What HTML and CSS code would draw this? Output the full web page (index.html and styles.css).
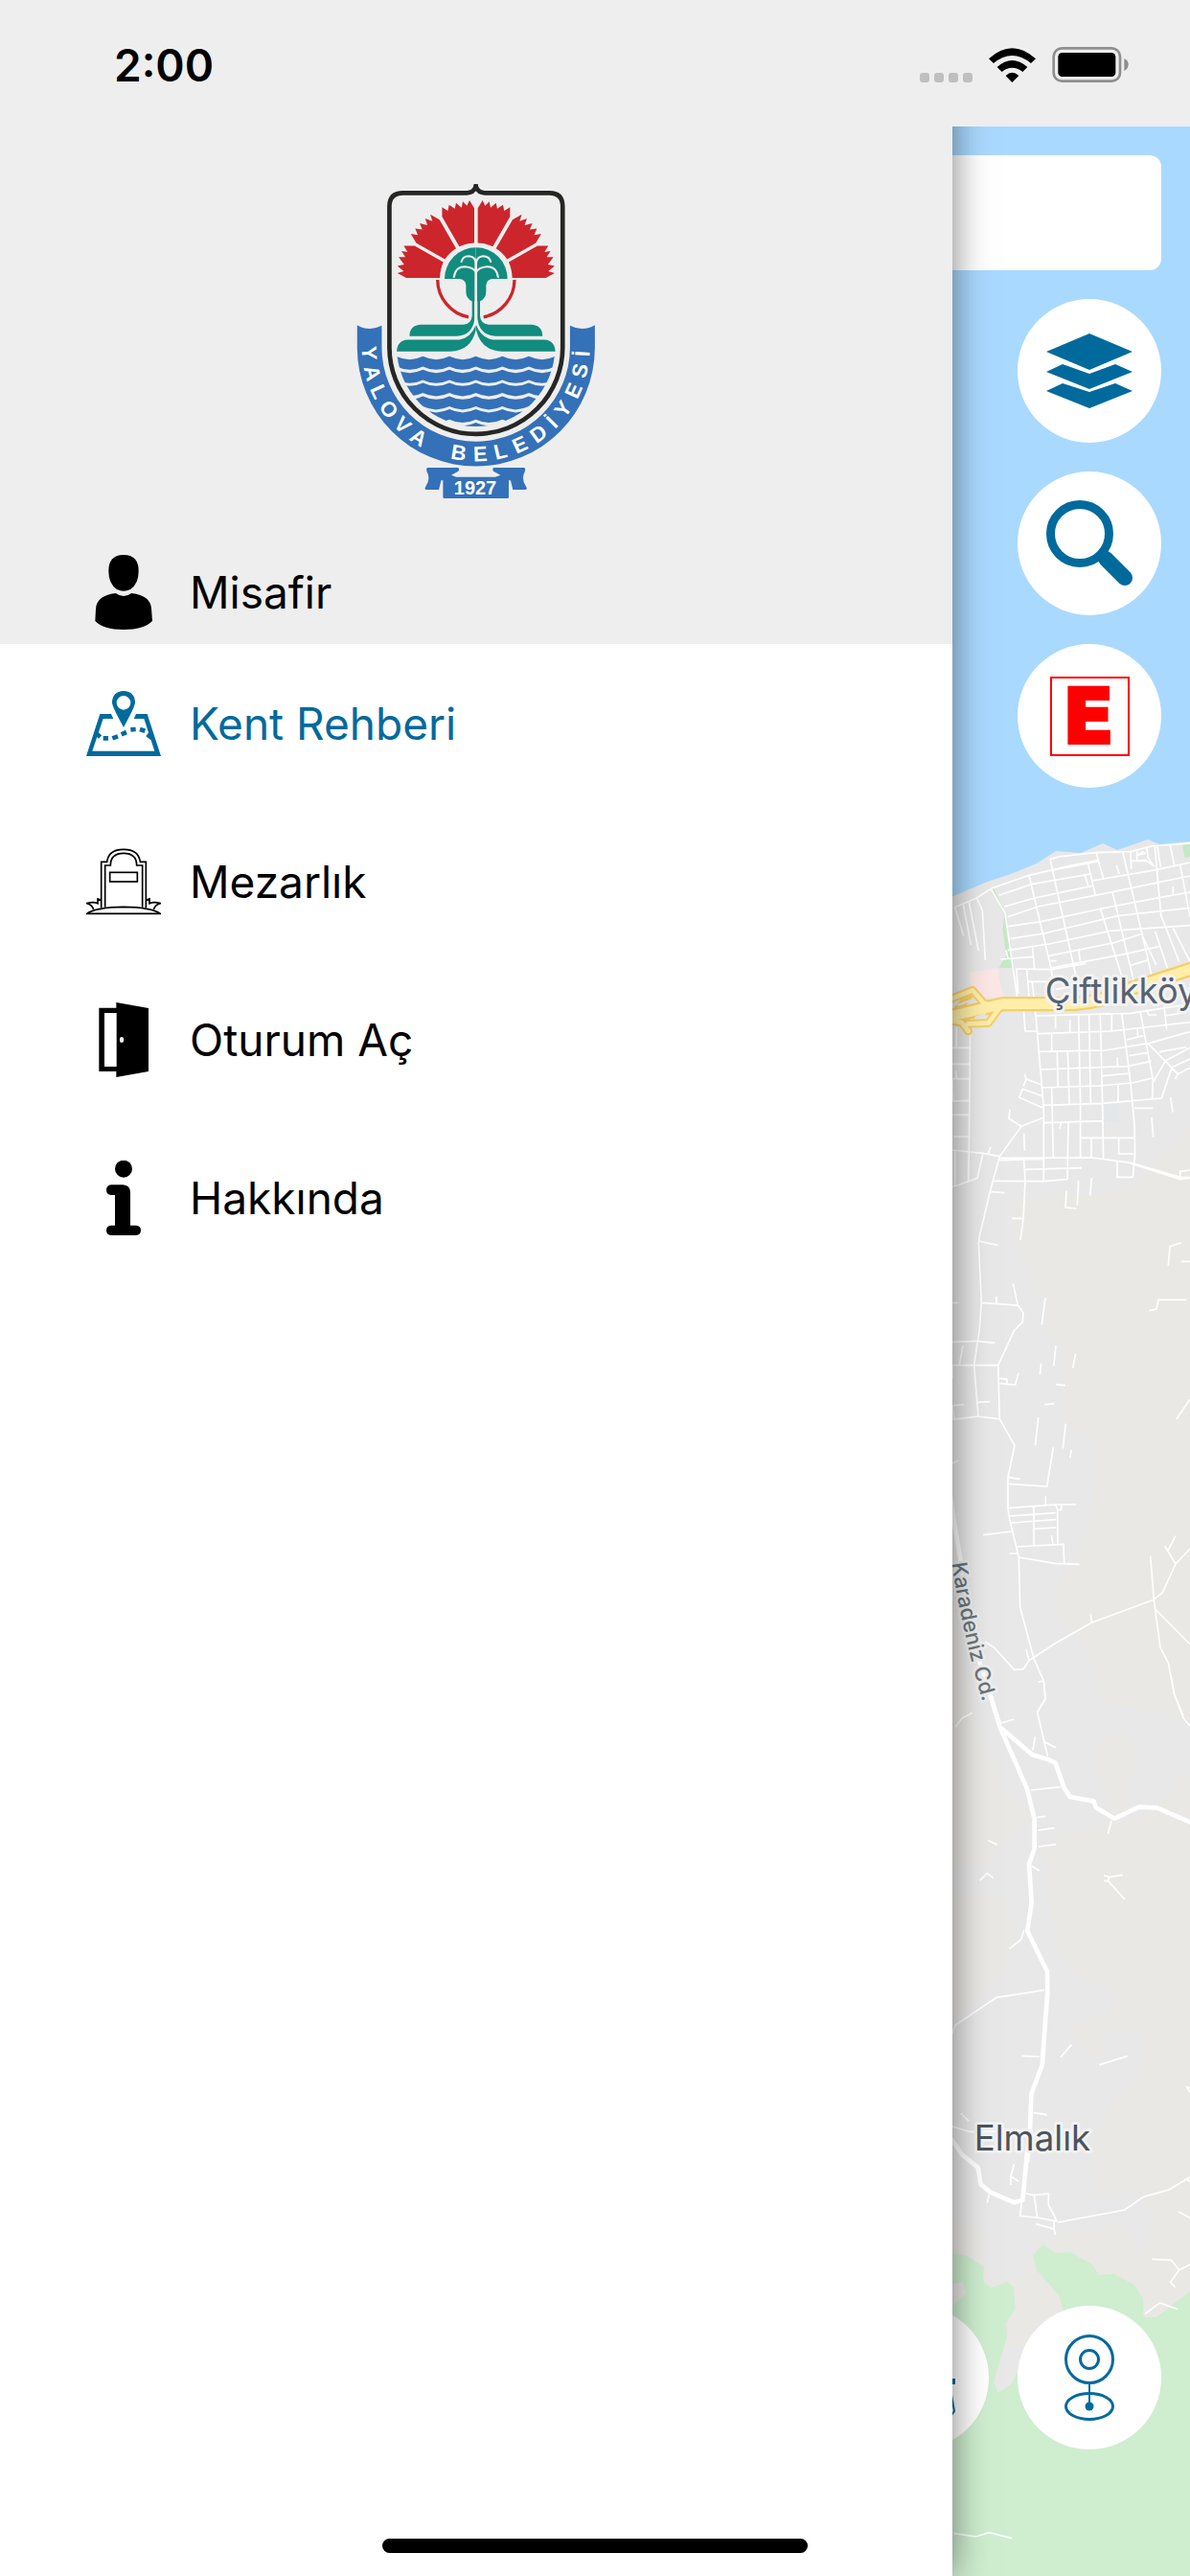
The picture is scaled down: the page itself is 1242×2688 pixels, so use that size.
FILE: index.html
```html
<!DOCTYPE html>
<html lang="tr">
<head>
  <meta charset="UTF-8" />
  <meta name="viewport" content="width=device-width, initial-scale=1.0"/>
  <title>Yalova Kent Rehberi</title>
  <link rel="stylesheet" href="styles.css">
</head>

<body>

<div class="app">

  <header class="status-bar">
    <span class="time">2:00</span>
    <div class="status-icons">
      <div class="signal"><i></i><i></i><i></i><i></i></div>
      <svg class="wifi" viewBox="276 57 147 108">
        <path d="M276 91 Q349 25 423 91 L408 105 Q349 57 291 105Z"/>
        <path d="M302 117 Q349 75 397 117 L382 132 Q349 107 317 132Z"/>
        <path d="M329 144 Q349 124 370 144 L349 165Z"/>
      </svg>
      <svg class="battery" viewBox="474 57 238 111">
        <rect x="478" y="61" width="208" height="103" rx="26" fill="none" stroke="#8e8e8e" stroke-width="8"/>
        <rect x="492" y="75" width="180" height="75" rx="13"/>
        <path d="M699 93 Q712 99 712 112 Q712 126 699 132Z" fill="#8e8e8e"/>
      </svg>
    </div>
  </header>

  <main class="map">
    <svg class="map-tiles" viewBox="0 132 1242 2556" preserveAspectRatio="xMaxYMin slice">
      <rect x="0" y="132" width="1242" height="2556" fill="#e8e8e8"/>

      <!-- terrain -->
      <g fill="#e9e8e4">
        <path d="M1242 1177 L1213 1200 1197 1217 1180 1237 1153 1248 1113 1248 1052 1253 1058 1277 1062 1297 1072 1327 1088 1357 1095 1390 1113 1410 1110 1430 1112 1470 1115 1490 1140 1497 1147 1507 1140 1543 1138 1583 1130 1613 1103 1647 1103 1690 1123 1710 1140 1733 1152 1777 1242 1793Z"/>
        <path d="M1242 1853 H1228 L1220 1877 1187 1897 1160 1900 1117 1913 1080 1927 1095 1947 1098 2000 1103 2030 1123 2057 1162 2080 1157 2098 1117 2112 1120 2130 1147 2147 1155 2122 1180 2117 1193 2127 1190 2160 1167 2187 1147 2217 1143 2250 1147 2267 1140 2290 1180 2287 1207 2317 1190 2347 1167 2320 1080 2340 1070 2375 1040 2382 1030 2370 1025 2327 993 2313 V2450 H1242Z"/>
        <path d="M993 1660 L1020 1800 1047 1867 1077 1897 1035 1935 1030 1947 H993Z"/>
        <path d="M993 1980 H1047 L1057 2017 1047 2057 993 2110Z"/>
        <path d="M1147 1813 Q1187 1800 1187 1843 L1173 1873 1180 1893 1160 1897 1145 1843Z"/>
      </g>

      <!-- sea -->
      <path fill="#aad9ff" d="M0 132 H1242 V878 L1210 881 1198 876 1166 887 1151 880 1128 890 1102 888 1082 901 1055 912 1028 921 993 936 0 1000Z"/>

      <!-- forest -->
      <g transform="translate(980 2200) scale(.33333)">
        <path fill="#ceeecf" d="M39 453 L83 460 141 495 138 540 163 562 215 542 234 560 238 628 210 672 213 715 171 857 186 890 225 865 300 720 390 632 375 585 305 505 294 458 326 427 365 452 410 450 478 487 500 521 550 519 612 553 638 595 640 653 681 653 786 573 V1464 H-2940 V620 H39 L84 580 73 543 39 549Z"/>
        <path class="street" d="M39 56 L95 73 H220 M68 15 L94 40 M296 14 L338 20 M235 175 L225 213 250 229 M225 213 V240 M157 270 L151 296 M260 285 L254 337 308 342 370 354 M272 267 L298 272 343 267 V303 L370 354 M298 272 L308 342 M302 361 L360 378 365 397 M360 355 V378 M372 357 L582 318 640 277 720 255 786 215 M776 222 L786 230 M750 323 L786 343 M667 472 L727 475 752 506 786 489 M752 506 L725 544 739 560 M645 644 L691 609 748 629 M45 1330 L115 1341 157 1328 228 1346"/>
        <path class="road" d="M39 96 L72 145 122 185 131 238 160 262 236 295 262 287 278 120"/>
      </g>

      <!-- town blocks -->
      <g transform="translate(980 840) scale(.33333)">
        <path fill="#c5e8c5" d="M163 260 L170 258 207 340 236 510 H188 L210 470 200 390 204 345Z M762 126 L786 120 V163 L770 165Z"/>
        <path fill="#fce7e6" d="M95 525 L183 511 190 555 207 603 105 600Z"/>
        <path fill="#e4e7ea" d="M515 935 H563 V992 H515Z"/>
        <path class="street" d="M50 320 L118 291 163 262 282 220 410 190 500 173 M348 170 L375 162 492 149 600 146 665 129 786 120 M50 320 L77 410 M76 310 L100 438 M94 303 L124 457 M118 291 L136 330 145 486"/>
        <path class="street" d="M163 262 L207 340 245 600 M282 220 L352 515 358 580 M348 170 L432 550 M492 149 L515 230 M466 180 L490 284 M455 215 L467 252 M505 323 L578 553 M543 272 L612 560 M575 146 L640 420 665 530 M676 130 L695 345 752 490 M733 385 L786 490 M755 186 L786 350 M724 127 L738 193 M684 130 L694 195 M556 188 L564 216 M733 255 V280"/>
        <path class="street" d="M188 283 L290 248 475 216 M205 318 L300 291 480 253 M215 350 L310 318 545 272 786 222 M217 380 L320 365 510 324 690 290 786 273 M225 418 L330 402 560 347 786 322 M215 455 L345 435 535 394 786 377 M193 483 L295 475 M345 472 L545 432 640 402 M350 510 L580 467 692 442 M240 513 L352 515 460 496 M210 455 L216 480 M293 447 L299 512 M480 237 L680 203 786 180 M350 205 L498 177 M600 145 L602 200 M604 175 H650 L675 192 M620 145 V175 L650 172 M650 130 L655 165 670 188 M637 410 L680 500 M677 395 L715 510 M597 503 L657 485 M640 145 L620 158 648 150"/>
        <path class="street" d="M243 515 L248 590 M275 515 L282 600 M280 553 H350 M292 555 L297 600 M437 453 L442 488 M345 488 H368 M365 577 L430 566"/>
        <path class="street" d="M265 640 L270 708 H305 M302 645 L328 950 V1175 M305 660 L480 655 600 652 786 623 M310 716 L540 708 786 680 M310 772 L520 768 660 745 786 710 M318 828 L590 818 665 802 M323 885 L500 879 605 870 667 855 M328 940 L510 934 697 918 M330 995 L512 989 M446 1042 H610 M365 660 V700 M410 672 V712 M353 717 V770 M370 772 L373 882 M353 885 L358 1105 M403 770 L408 935 M437 655 L440 800 443 935 M470 655 L475 935 M505 655 L512 935 515 1108 M541 655 V708 M572 650 L600 870 612 1000 614 1092 607 1165 M630 645 L670 860 668 918 M588 735 L640 722 M595 785 L655 775 M512 848 L600 840 M622 700 V722 M650 640 L656 657 H682 M705 630 L713 703 M708 660 L756 652 V630 M670 868 L710 800 786 760 M655 747 L748 842 786 823 M740 858 L748 842 728 825 697 918 M690 773 L775 758 M728 822 L786 795"/>
        <path class="street" d="M559 790 V818 M561 877 V930 M443 935 V1103 M405 990 L402 1172 M382 995 L378 1014 M477 1042 V1103 M563 1042 V1092 H614 M612 949 H670 M666 978 L671 1040 M725 915 L732 962 M190 1105 L480 1104 600 1120 755 1165 786 1166 M190 1112 L330 1108 M600 1122 L755 1172 786 1168 M755 1165 V1147 L786 1143 M558 1116 V1165 H607 M268 1141 L447 1136 M172 1177 L328 1178 402 1172"/>
        <path class="street" d="M39 1080 L138 1090 190 1100 258 1006 328 978 M258 1006 L219 982 222 953 M190 1100 L160 1210 127 1350 M160 1210 L205 1214 M138 1090 L120 1168 39 1197 M155 1090 L162 1070 M266 1028 L268 1082 M266 1112 L270 1178 264 1295 257 1350 M228 1294 H264 M268 842 L273 858 320 875 M273 858 L265 880 M325 912 L262 889 251 915 325 948 M98 700 L94 1080 92 1182 M39 760 H94 M39 811 H95 M39 857 H94 M39 927 L94 925 M39 970 H92 M45 1038 H92 M55 695 V760 M53 832 L55 857 M50 1080 V1195 M42 860 L45 925 M399 1208 L396 1260 430 1263 M437 1175 L433 1253 M478 1167 L473 1223"/>

        <!-- motorway and junction -->
        <g fill="none" stroke-linejoin="round" stroke-linecap="round">
          <path stroke="#f7cf65" stroke-width="46" d="M20 665 L200 623 H420 Q520 615 600 575 L800 510"/>
          <path stroke="#f7cf65" stroke-width="26" d="M30 610 L105 580 140 620 190 635 155 682 90 685 M30 675 L70 680 92 708 M105 580 L60 640"/>
          <path stroke="#ffefaa" stroke-width="14" d="M30 610 L105 580 140 620 190 635 155 682 90 685 M30 675 L70 680 92 708"/>
          <path stroke="#ffefaa" stroke-width="32" d="M20 665 L200 623 H420 Q520 615 600 575 L800 510"/>
          <path stroke="#e8e8e8" stroke-width="7" d="M60 626 L100 612 M115 665 L145 655"/>
        </g>
        <text class="place" x="332" y="622" fill="#59626f">Çiftlikköy</text>
      </g>

      <!-- open country -->
      <g transform="translate(980 1290) scale(.33333)">
        <path class="street" d="M127 0 L124 20 133 208 127 290 110 404 123 564 M124 15 L184 28 M256 0 L255 12 M133 208 L247 216 232 148 M180 188 V212 M247 216 L264 240 262 268 235 296 185 404 190 572 M39 331 L120 328 175 334 M39 404 H185 M75 342 L64 402 M42 404 V445 M39 208 L60 209 M190 445 L212 447 214 460 M190 461 L239 465 249 428 M39 574 L123 564 190 572 237 655 216 755 V852 L220 880 250 1005 254 1162 298 1325 328 1392 333 1447 307 1492 M39 530 L78 527 M122 520 L159 518 M42 530 L47 572"/>
        <path class="street" d="M333 193 L322 276 M366 342 L359 406 M428 367 L419 412 M320 398 L316 433 M366 464 L396 467 M330 527 L362 524 M311 567 L302 654 M397 587 L388 664 M415 668 L410 694 M358 661 L338 783 216 775 M216 755 L254 760 M334 814 V840 M216 851 L365 840 H430 M365 840 L371 857 383 856 V836 M371 857 L372 962 M220 876 L365 866 M228 897 L367 887 M299 916 L367 912 M297 845 V967 M240 972 L390 964 392 1024 M352 936 L357 963 M138 935 L230 924 M221 993 H246 M250 1005 L362 1024 440 1027"/>
        <path class="street" d="M145 1270 L172 1287 236 1357 264 1355 282 1328 363 1275 478 1210 672 1138 700 1115 741 1026 786 978 M282 1328 L273 1294 M478 1210 L475 1182 M741 1026 L707 970 M717 984 L741 938 M662 1000 L673 1138 693 1288 718 1335 737 1435 765 1500 M678 1168 L786 1277 M744 572 L786 510 M718 92 L723 32 758 20 M758 79 H786 M658 233 L681 228 687 199 H776 M312 1395 L328 1392 M39 712 L60 703"/>
        <path class="road" d="M20 700 L45 880 75 1060 110 1280 190 1530"/>
        <path id="karadeniz" fill="none" d="M40 1024 Q72 1240 142 1475"/>
        <text class="street-name"><textPath href="#karadeniz">Karadeniz Cd.</textPath></text>
      </g>

      <g transform="translate(980 1750) scale(.33333)">
        <path class="street" d="M51 157 L72 129 105 112 M195 144 L234 132 M301 187 L294 230 M328 12 L333 68 308 110 340 247 M331 203 L366 221 M288 354 L380 344 M308 439 L333 436 M310 480 L362 472 M312 531 L366 524 M290 591 L314 606 M154 511 L182 525 M128 637 L151 614 170 629 M540 450 L529 491 M516 621 L534 626 576 619 M516 638 L529 637 582 696 M534 626 L529 637 M266 793 L257 822 220 851 M330 980 L180 1003 52 1089 39 1120 M260 1186 L315 1188 M415 1151 L380 1191 M501 1214 L590 1187 M297 1365 L338 1370 M727 0 L737 55 765 128 786 153 M786 1300 L776 1284 786 1286"/>
        <path class="road" d="M162 60 L190 155 276 350 299 445 V536 L282 585 290 705 277 795 339 922 340 985 323 1215 289 1305 285 1420 276 1520 M190 155 L292 243 345 259 365 269 391 345 410 375 485 389 491 408 550 443 625 407 682 409 800 460"/>
        <text class="place" x="110" y="1482" fill="#4d545c">Elmalık</text>
      </g>
    </svg>

    <div class="map-controls">
      <input class="search-box" type="text" aria-label="Adres ara">
      <button class="round-btn" aria-label="Katmanlar">
        <svg viewBox="0 0 90 90" fill="#016a9c">
          <path d="M45 6 L90 25 45 44 0 25Z"/>
          <path d="M17 38 L45 48 72 38 90 46 45 64 0 46Z"/>
          <path d="M17 58 L45 67 72 58 90 66 45 84 0 66Z"/>
        </svg>
      </button>
      <button class="round-btn" aria-label="Ara">
        <svg viewBox="0 0 90 90" fill="none" stroke="#016a9c">
          <circle cx="35" cy="35" r="30.5" stroke-width="9"/>
          <path d="M62 61 L82 81" stroke-width="16" stroke-linecap="round"/>
        </svg>
      </button>
      <button class="round-btn" aria-label="Nöbetçi eczaneler">
        <svg viewBox="0 0 90 90" fill="#ff0000">
          <rect x="5" y="5" width="81" height="81" fill="none" stroke="#ff0000" stroke-width="2"/>
          <text class="pharmacy" x="44" y="73" text-anchor="middle">E</text>
        </svg>
      </button>
      <div class="bottom-controls">
        <button class="round-btn" aria-label="Ölçüm">
          <svg viewBox="0 0 90 90" fill="#016a9c">
            <rect x="5" y="46" width="80" height="6"/>
            <path d="M79 52 L84 80 81 84 76 80 M11 52 L6 80 9 84 14 80" fill="none" stroke="#016a9c" stroke-width="2"/>
          </svg>
        </button>
        <button class="round-btn" aria-label="Kameralar">
          <svg viewBox="0 0 90 90" fill="none" stroke="#016a9c">
            <circle cx="45" cy="26" r="24.5" stroke-width="3"/>
            <circle cx="45" cy="26" r="9.5" stroke-width="3"/>
            <path d="M45 51 V75" stroke-width="2"/>
            <ellipse cx="45" cy="75" rx="24.5" ry="13.5" stroke-width="3"/>
            <circle cx="45" cy="75" r="4.5" fill="#016a9c" stroke="none"/>
          </svg>
        </button>
      </div>
    </div>
  </main>

  <aside class="drawer">
    <div class="drawer-header">
      <svg class="logo" viewBox="66 38 747 985" role="img" aria-label="Yalova Belediyesi 1927">
        <defs>
          <clipPath id="sea"><circle cx="440" cy="550" r="248"/></clipPath>
          <path id="wave" d="M25 578 q42 20 83 0 q42 20 83 0 q42 20 83 0 q42 20 83 0 q42 20 83 0 q42 20 83 0 q42 20 83 0 q42 20 83 0 v32 q-42 20 -83 0 q-42 20 -83 0 q-42 20 -83 0 q-42 20 -83 0 q-42 20 -83 0 q-42 20 -83 0 q-42 20 -83 0 q-42 20 -83 0Z"/>
          <path id="motto" d="M83 530 V550 A357 357 0 0 0 797 550 V500"/>
          <g id="half">
            <g fill="#cc262c">
              <path d="M334 111 L352 122 356 103 374 115 378 97 395 112 399 93 412 106 420 89 435 114 V223 Q410 224 388 234 L334 140Z"/>
              <path d="M297 133 L326 150 378 240 Q357 253 343 274 L253 223 236 194 258 198 250 178 272 181 264 161 288 167 281 146 304 154Z"/>
              <path d="M214 232 H248 L338 283 Q328 305 327 332 H222 L194 317 214 311 194 295 215 290 198 267 219 267 207 248 226 251Z"/>
              <path d="M320 338 A120 120 0 0 0 417 455" fill="none" stroke="#cc262c" stroke-width="10"/>
            </g>
            <g fill="#128c7e">
              <path d="M342 335 A98 98 0 0 1 440 237 V405 H428 Q409 397 409 375 V355 Q408 338 390 335Z"/>
              <path d="M428 400 H436 V460 Q430 512 380 515 H232 Q233 480 268 479 H400 Q427 476 428 450Z"/>
              <path d="M192 563 Q194 528 226 526 H388 Q424 520 440 480 V495 Q425 560 360 563Z"/>
            </g>
            <path d="M394 284 Q398 264 418 264 Q438 266 440 285 M371 332 Q375 297 405 297 Q434 299 440 315" fill="none" stroke="#eee" stroke-width="6"/>
          </g>
        </defs>

        <path d="M68 480 Q106 502 145 482 V550 A295 295 0 0 0 735 550 V482 Q774 502 813 480 V550 A372 372 0 0 1 68 550Z" fill="#3471b8"/>
        <path d="M169 108 Q169 66 212 66 H412 Q432 66 440 46 Q448 66 468 66 H670 Q712 66 712 108 V550 A271 271 0 0 1 169 550Z" fill="#eee" stroke="#262624" stroke-width="14"/>
        <rect x="433" y="39" width="14" height="18" fill="#262624"/>

        <use href="#half"/>
        <use href="#half" transform="matrix(-1 0 0 1 881 0)"/>
        <path d="M440 275 V475" stroke="#eee" stroke-width="8"/>

        <g clip-path="url(#sea)" fill="#3471b8">
          <use href="#wave"/>
          <use href="#wave" y="42"/>
          <use href="#wave" y="83"/>
          <use href="#wave" y="125"/>
          <use href="#wave" y="166"/>
          <use href="#wave" y="208"/>
        </g>

        <g fill="#3471b8">
          <path d="M288 927 H384 Q390 930 385 938 L363 950 378 956 H540 Q543 956 543 960 V1019 Q543 1023 539 1023 H341 Q337 1023 337 1019 V967 H331 L324 996 H284 Q278 994 282 988 Q300 962 286 938 Q284 930 288 927Z"/>
          <path d="M592 927 H496 Q490 930 495 938 L517 950 502 956 V967 H549 L556 996 H596 Q602 994 598 988 Q580 962 594 938 Q596 930 592 927Z"/>
        </g>
        <g class="logo-text" fill="#fff">
          <text><textPath href="#motto" startOffset="17">Y&#8196;A&#8196;L&#8196;O&#8196;V&#8196;A</textPath></text>
          <text><textPath href="#motto" startOffset="499">B&#8201;&#8201;E&#8201;&#8201;L&#8201;&#8201;E&#8201;&#8201;D&#8201;&#8201;İ&#8201;&#8201;Y&#8201;&#8201;E&#8201;&#8201;S&#8201;&#8201;İ</textPath></text>
          <text class="year" x="438" y="1011" text-anchor="middle">1927</text>
        </g>
      </svg>

      <div class="user">
        <svg class="icon" viewBox="90 57 234 234">
          <path d="M207 57 Q254 57 254 108 Q254 148 228 165 Q207 176 186 165 Q160 148 160 108 Q160 57 207 57Z"/>
          <path d="M182 177 Q207 195 232 177 Q292 184 294 226 L297 264 Q270 291 207 291 Q144 291 118 264 L120 226 Q122 184 182 177Z"/>
        </svg>
        <span>Misafir</span>
      </div>
    </div>

    <nav class="menu">
      <a class="active" href="#">
        <svg class="icon" viewBox="90 468 234 234">
          <path fill-rule="evenodd" d="M207 483 Q243 485 243 520 Q243 532 207 597 Q171 532 171 520 Q171 485 207 483Z M207 498 A22 22 0 1 0 207 542 A22 22 0 1 0 207 498Z"/>
          <path fill-rule="evenodd" d="M133 555 H168 L175 570 H143 L109 671 H304 L271 570 H239 L246 555 H281 L324 687 H90Z"/>
          <path d="M120 615 L134 627 M143 631 H159 M172 631 L189 625 M200 619 L216 612 M229 604 L245 603 M258 603 L274 608 M281 619 L297 631" fill="none" stroke="currentColor" stroke-width="14"/>
        </svg>
        <span>Kent Rehberi</span>
      </a>
      <a href="#">
        <svg class="icon outline" viewBox="90 63 234 234">
          <path d="M137 262 V118 H155 Q160 79 207 79 Q254 79 259 118 H277 V262"/>
          <path d="M149 260 V129 H166 Q166 91 207 91 Q248 91 248 129 H266 V260"/>
          <rect x="164" y="151" width="86" height="29"/>
          <path d="M92 280 Q120 260 207 259 Q294 260 322 280Z"/>
          <path d="M113 267 Q108 252 92 248 Q112 242 126 248 V234 L137 238 M301 267 Q306 252 322 248 Q302 242 288 248 V234 L277 238"/>
        </svg>
        <span>Mezarlık</span>
      </a>
      <a href="#">
        <svg class="icon" viewBox="90 558 234 234">
          <path d="M130 575 H184 V558 L285 576 V774 L184 792 V774 H130Z"/>
          <rect x="147" y="591" width="38" height="168" fill="#fff"/>
          <rect x="195" y="666" width="12" height="18" rx="6" fill="#fff"/>
        </svg>
        <span>Oturum Aç</span>
      </a>
      <a href="#">
        <svg class="icon" viewBox="90 1053 234 234">
          <circle cx="207" cy="1079" r="27"/>
          <path d="M168 1129 H205 Q228 1131 228 1153 V1256 H246 Q261 1258 261 1271 Q261 1285 246 1287 H168 Q153 1285 153 1271 Q153 1258 168 1256 H180 V1161 H168 Q153 1159 153 1145 Q153 1131 168 1129Z"/>
        </svg>
        <span>Hakkında</span>
      </a>
    </nav>
  </aside>

  <div class="home-indicator"></div>
</div>

</body>
</html>
```
FILE: styles.css
```css
* {
  box-sizing: border-box;
  font-family: Inter, 'Liberation Sans', sans-serif;
}

body {
  margin: 0;
  background: #fff;
}

.app {
  position: relative;
  display: flex;
  flex-direction: column;
  min-height: 100vh;
  overflow: hidden;
}

/* status bar */
.status-bar {
  position: relative;
  z-index: 3;
  display: flex;
  justify-content: space-between;
  align-items: flex-start;
  height: 132px;
  padding: 38px 64px 0 119px;
  background: #eee;
}

.time {
  font-size: 46px;
  line-height: 60px;
  font-weight: 600;
}

.status-icons {
  display: flex;
  align-items: flex-end;
  gap: 17px;
  padding-top: 11px;
}

.signal {
  display: flex;
  gap: 5px;
}

.signal i {
  width: 10px;
  height: 10px;
  border-radius: 3px;
  background: #bfbfbf;
}

.wifi {
  width: 49px;
  height: 36px;
}

.battery {
  width: 80px;
  height: 37px;
}

/* map */
.map {
  position: relative;
  display: flex;
  flex: 1;
}

.map-tiles {
  position: absolute;
  top: 0;
  left: 0;
  width: 100%;
  height: 100%;
}

.street {
  fill: none;
  stroke: #fff;
  stroke-width: 5;
}

.road {
  fill: none;
  stroke: #fff;
  stroke-width: 14;
  stroke-linejoin: round;
}

.place {
  font-size: 110px;
  stroke: #f3f3f3;
  stroke-width: 18;
  stroke-linejoin: round;
  paint-order: stroke;
}

.street-name {
  font-size: 66px;
  font-weight: 500;
  fill: #6b767d;
  stroke: #efefef;
  stroke-width: 16;
  stroke-linejoin: round;
  paint-order: stroke;
}

.map-controls {
  position: relative;
  display: flex;
  flex: 1;
  flex-direction: column;
  align-items: flex-end;
  gap: 30px;
  padding: 30px 30px 132px;
}

.search-box {
  width: 100%;
  height: 120px;
  padding: 0 30px;
  border: none;
  border-radius: 12px;
  background: #fff;
  font-size: 46px;
}

.round-btn {
  display: flex;
  align-items: center;
  justify-content: center;
  width: 150px;
  height: 150px;
  padding: 0;
  border: none;
  border-radius: 50%;
  background: #fff;
  cursor: pointer;
}

.round-btn svg {
  width: 90px;
  height: 90px;
  overflow: visible;
}

.pharmacy {
  font-family: 'DejaVu Sans', sans-serif;
  font-size: 78px;
  font-weight: bold;
  stroke: #ff0000;
  stroke-width: 4;
}

.bottom-controls {
  display: flex;
  gap: 30px;
  margin-top: auto;
}

/* drawer */
.drawer {
  position: absolute;
  z-index: 2;
  top: 0;
  bottom: 0;
  left: 0;
  width: 80%;
  background: #fff;
  box-shadow: 0 0 36px rgba(0, 0, 0, 0.5);
}

.drawer-header {
  display: flex;
  flex-direction: column;
  align-items: center;
  padding-top: 192px;
  background: #eee;
}

.logo {
  width: 249px;
  height: 328px;
}

.logo-text {
  font-size: 66px;
  font-weight: bold;
}

.logo-text text,
.logo-text textPath {
  font-family: 'Liberation Sans', sans-serif;
}

.logo-text .year {
  font-size: 60px;
}

.user,
.menu a {
  display: flex;
  align-items: center;
  gap: 30px;
  width: 100%;
  padding: 0 90px;
  font-size: 46px;
  color: #000;
}

.user {
  height: 108px;
  margin-top: 44px;
}

.menu a {
  height: 165px;
  text-decoration: none;
}

.menu a.active {
  color: #016a9c;
}

.icon {
  width: 78px;
  height: 78px;
  fill: currentColor;
}

.icon.outline {
  fill: none;
  stroke: currentColor;
  stroke-width: 5;
}

.home-indicator {
  position: absolute;
  z-index: 4;
  bottom: 24px;
  left: 50%;
  width: 444px;
  height: 15px;
  border-radius: 8px;
  background: #000;
  transform: translateX(-50%);
}
```
